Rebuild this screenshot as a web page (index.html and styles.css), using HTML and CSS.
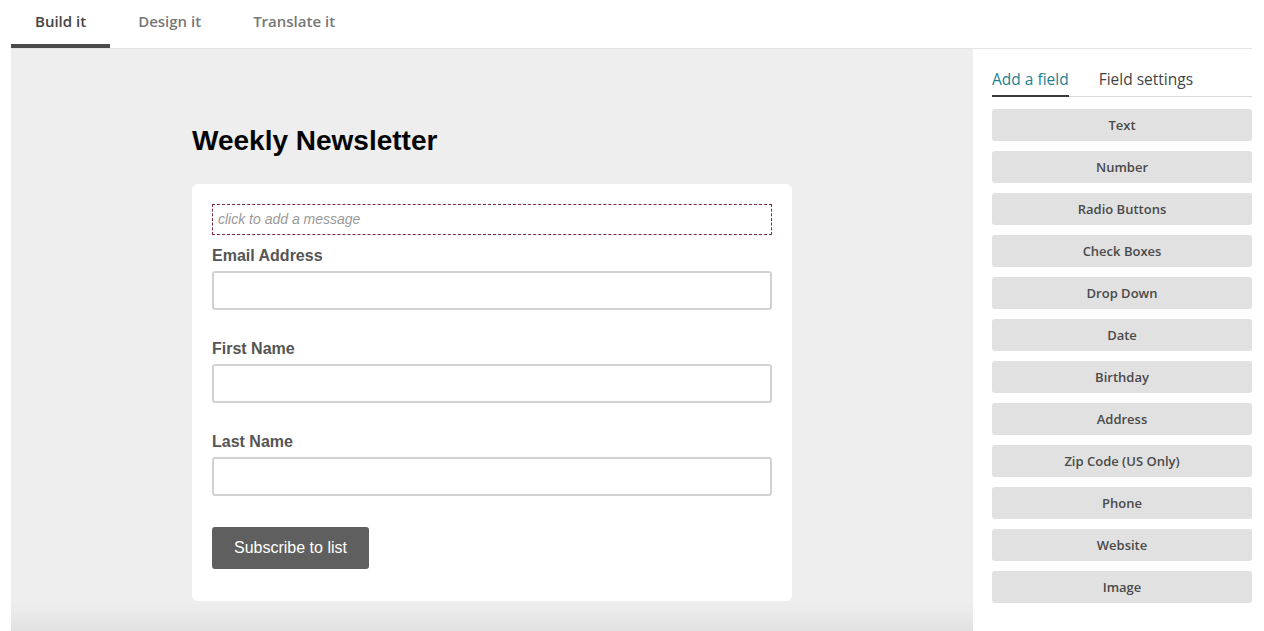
FILE: index.html
```html
<!DOCTYPE html>
<html lang="en">
<head>
<meta charset="utf-8">
<title>Form builder</title>
<link rel="stylesheet" href="styles.css">
</head>
<body>
<div class="app">
  <nav class="tabs">
    <a class="tab active">Build it</a>
    <a class="tab">Design it</a>
    <a class="tab">Translate it</a>
  </nav>
  <div class="main">
    <section class="canvas">
      <h1 class="form-title">Weekly Newsletter</h1>
      <div class="card">
        <div class="message">click to add a message</div>
        <div class="field first">
          <label class="label">Email Address</label>
          <div class="input"></div>
        </div>
        <div class="field">
          <label class="label">First Name</label>
          <div class="input"></div>
        </div>
        <div class="field">
          <label class="label">Last Name</label>
          <div class="input"></div>
        </div>
        <button class="submit">Subscribe to list</button>
      </div>
    </section>
    <aside class="sidebar">
      <div class="side-tabs">
        <span class="side-tab active">Add a field</span>
        <span class="side-tab">Field settings</span>
      </div>
      <div class="field-list">
        <button class="field-btn">Text</button>
        <button class="field-btn">Number</button>
        <button class="field-btn">Radio Buttons</button>
        <button class="field-btn">Check Boxes</button>
        <button class="field-btn">Drop Down</button>
        <button class="field-btn">Date</button>
        <button class="field-btn">Birthday</button>
        <button class="field-btn">Address</button>
        <button class="field-btn">Zip Code (US Only)</button>
        <button class="field-btn">Phone</button>
        <button class="field-btn">Website</button>
        <button class="field-btn">Image</button>
      </div>
    </aside>
  </div>
</div>
</body>
</html>
```
FILE: styles.css
```css
* { box-sizing: border-box; }
html, body { margin: 0; padding: 0; background: #fff; }
body { font-family: "Open Sans", "Liberation Sans", sans-serif; overflow: hidden; height: 631px; }

.app { padding: 0 12px 0 11px; }

.tabs {
  display: flex;
  gap: 4px;
  height: 49px;
  border-bottom: 1px solid #e4e4e4;
}
.tab {
  display: block;
  height: 48px;
  padding: 10px 24px 0;
  font-size: 15px;
  line-height: 22px;
  color: #777;
  font-weight: 600;
  border-bottom: 4px solid transparent;
}
.tab.active {
  color: #444;
  border-bottom-color: #4a4a4a;
}

.main {
  display: flex;
  height: 582px;
}
.canvas {
  flex: 1;
  background: linear-gradient(#eeeeee, #eeeeee calc(100% - 30px), #e2e2e2);
  padding: 76px 0 0 181px;
  font-family: "Liberation Sans", Arial, sans-serif;
}
.form-title {
  margin: 0 0 27px;
  font-size: 28px;
  line-height: 32px;
  font-weight: 700;
  color: #050505;
}
.card {
  width: 600px;
  background: #fff;
  border-radius: 6px;
  padding: 20px 20px 32px;
}
.message {
  height: 31px;
  border: 1px dashed #7a2b3e;
  padding: 0 5px;
  font-size: 14px;
  line-height: 29px;
  font-style: italic;
  color: #999;
}
.field { margin-top: 28px; }
.field.first { margin-top: 10px; }
.label {
  display: block;
  font-size: 16px;
  line-height: 22px;
  font-weight: 700;
  color: #555;
}
.input {
  margin-top: 4px;
  height: 39px;
  border: 2px solid #d2d2d2;
  border-radius: 3px;
  background: #fff;
}
.submit {
  display: block;
  margin-top: 31px;
  height: 42px;
  padding: 0 22px;
  border: 0;
  border-radius: 3px;
  background: #5f5f5f;
  color: #fff;
  font-family: "Liberation Sans", Arial, sans-serif;
  font-size: 16px;
}

.sidebar {
  width: 279px;
  background: #fff;
  padding: 18px 0 0 19px;
}
.side-tabs {
  display: flex;
  gap: 30px;
  border-bottom: 1px solid #d9d9d9;
}
.side-tab {
  font-size: 15.5px;
  line-height: 22px;
  padding: 1px 0 5px;
  color: #444;
  font-weight: 500;
  margin-bottom: -1px;
  border-bottom: 2px solid transparent;
}
.side-tab.active {
  color: #23808f;
  border-bottom-color: #3a3a3a;
}
.field-list {
  display: flex;
  flex-direction: column;
  gap: 10px;
  margin-top: 12px;
}
.field-btn {
  height: 32px;
  border: 0;
  border-radius: 3px;
  background: #e1e1e1;
  color: #4a4a4a;
  font-family: "Open Sans", "Liberation Sans", sans-serif;
  font-size: 13px;
  font-weight: 600;
  padding: 0;
}
```
